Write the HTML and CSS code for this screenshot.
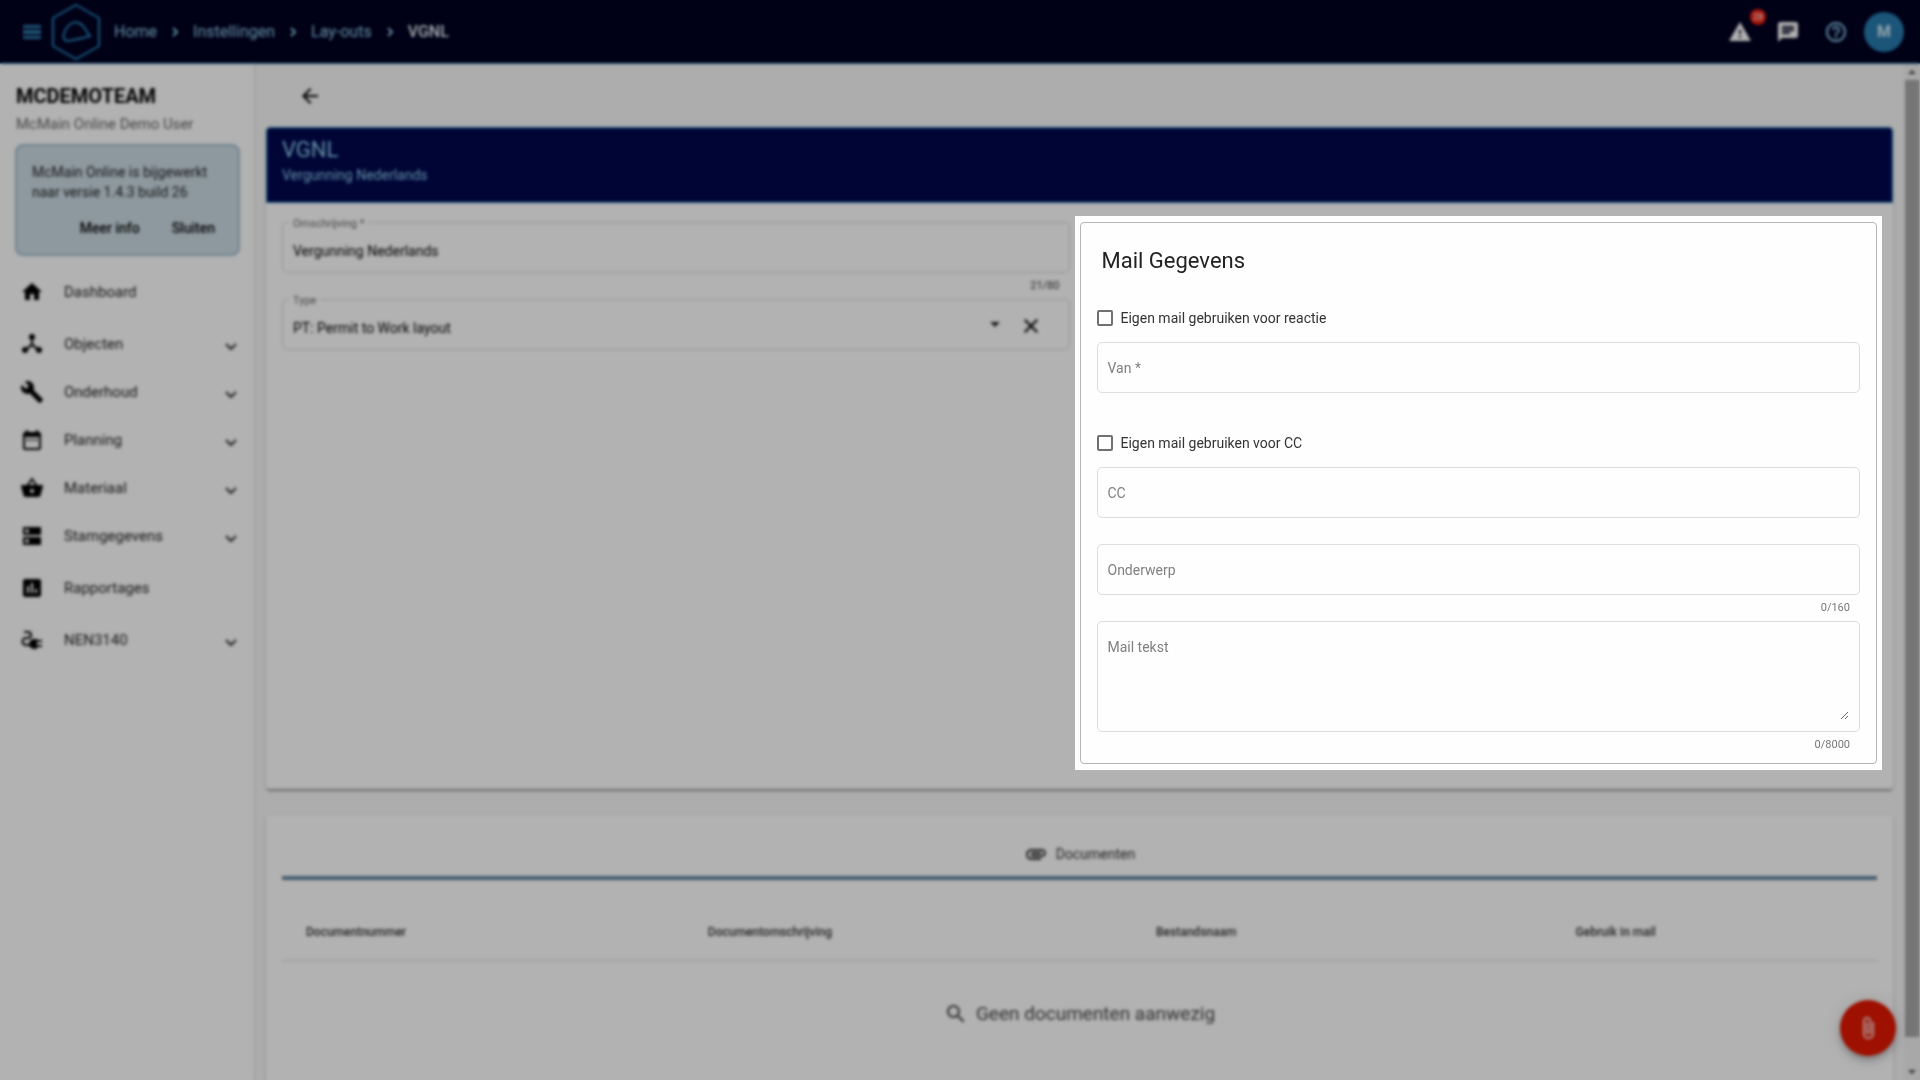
FILE: index.html
```html
<!DOCTYPE html>
<html lang="nl">
<head>
  <meta charset="UTF-8">
  <title>McMain Online - VGNL</title>
  <link rel="stylesheet" href="styles.css">
</head>
<body>
  <header class="topbar">
    <button class="icon-btn menu-btn" aria-label="Menu">
      <svg class="icon" viewBox="0 0 24 24"><path d="M3 19h18v-3H3v3zm0-5h18v-4H3v4zm0-9v3h18V5H3z"/></svg>
    </button>
    <svg class="logo" viewBox="0 0 50 58">
      <path d="M25 2 48 15v28L25 56 2 43V15z"/>
      <path d="M16 38c-5-2-4-7-1-12 3-5 8-8 13-6 5 2 7 8 11 13-7 2-15 4-23 5z"/>
    </svg>
    <nav class="breadcrumb">
      <a href="#">Home</a>
      <svg viewBox="0 0 8 10"><path d="M2 1l4 4-4 4"/></svg>
      <a href="#">Instellingen</a>
      <svg viewBox="0 0 8 10"><path d="M2 1l4 4-4 4"/></svg>
      <a href="#">Lay-outs</a>
      <svg viewBox="0 0 8 10"><path d="M2 1l4 4-4 4"/></svg>
      <a href="#" class="current">VGNL</a>
    </nav>
    <div class="actions">
      <button class="icon-btn" aria-label="Meldingen">
        <svg class="icon" viewBox="0 0 24 24"><path d="M1 21h22L12 2 1 21zm12-3h-2v-2h2v2zm0-4h-2v-4h2v4z"/></svg>
        <span class="badge">28</span>
      </button>
      <button class="icon-btn" aria-label="Berichten">
        <svg class="icon" viewBox="0 0 24 24"><path d="M20 2H4c-1.1 0-1.99.9-1.99 2L2 22l4-4h14c1.1 0 2-.9 2-2V4c0-1.1-.9-2-2-2zM6 9h12v2H6V9zm8 5H6v-2h8v2zm4-6H6V6h12v2z"/></svg>
      </button>
      <button class="icon-btn help" aria-label="Help">
        <svg class="icon" viewBox="0 0 24 24"><path d="M11 18h2v-2h-2v2zm1-16C6.48 2 2 6.48 2 12s4.48 10 10 10 10-4.48 10-10S17.52 2 12 2zm0 18c-4.41 0-8-3.59-8-8s3.59-8 8-8 8 3.59 8 8-3.59 8-8 8zm0-14c-2.21 0-4 1.79-4 4h2c0-1.1.9-2 2-2s2 .9 2 2c0 2-3 1.75-3 5h2c0-2.25 3-2.5 3-5 0-2.21-1.79-4-4-4z"/></svg>
      </button>
      <button class="avatar">M</button>
    </div>
  </header>

  <div class="layout">
    <aside class="sidebar">
      <h1>MCDEMOTEAM</h1>
      <p class="user">McMain Online Demo User</p>
      <div class="notice">
        <p>McMain Online is bijgewerkt naar versie 1.4.3 build 26</p>
        <div class="notice-actions">
          <button>Meer info</button>
          <button>Sluiten</button>
        </div>
      </div>
      <nav class="menu">
        <a href="#" class="single">
          <svg class="icon" viewBox="0 0 24 24"><path d="M10 20v-6h4v6h5v-8h3L12 3 2 12h3v8z"/></svg>
          <span>Dashboard</span>
        </a>
        <a href="#">
          <svg class="icon" viewBox="0 0 24 24"><circle cx="12" cy="5" r="3"/><circle cx="5" cy="18" r="3"/><circle cx="19" cy="18" r="3"/><path d="M11 6h2v6l6 5-1 2-6-5-6 5-1-2 6-5z"/></svg>
          <span>Objecten</span>
          <svg class="chevron" viewBox="0 0 12 8"><path d="M1 1l5 5 5-5"/></svg>
        </a>
        <a href="#">
          <svg class="icon" viewBox="0 0 24 24"><path d="M22.7 19l-9.1-9.1c.9-2.3.4-5-1.5-6.9-2-2-5-2.4-7.4-1.3L9 6 6 9 1.6 4.7C.4 7.1.9 10.1 2.9 12.1c1.9 1.9 4.6 2.4 6.9 1.5l9.1 9.1c.4.4 1 .4 1.4 0l2.3-2.3c.5-.4.5-1.1.1-1.4z"/></svg>
          <span>Onderhoud</span>
          <svg class="chevron" viewBox="0 0 12 8"><path d="M1 1l5 5 5-5"/></svg>
        </a>
        <a href="#">
          <svg class="icon" viewBox="0 0 24 24"><path d="M9 11H7v2h2v-2zm4 0h-2v2h2v-2zm4 0h-2v2h2v-2zm2-7h-1V2h-2v2H8V2H6v2H5c-1.11 0-1.99.9-1.99 2L3 20c0 1.1.89 2 2 2h14c1.1 0 2-.9 2-2V6c0-1.1-.9-2-2-2zm0 16H5V9h14v11z"/></svg>
          <span>Planning</span>
          <svg class="chevron" viewBox="0 0 12 8"><path d="M1 1l5 5 5-5"/></svg>
        </a>
        <a href="#">
          <svg class="icon" viewBox="0 0 24 24"><path d="M17.21 9l-4.38-6.56c-.19-.28-.51-.42-.83-.42-.32 0-.64.14-.83.43L6.79 9H2c-.55 0-1 .45-1 1 0 .09.01.18.04.27l2.54 9.27c.23.84 1 1.46 1.92 1.46h13c.92 0 1.69-.62 1.93-1.46l2.54-9.27L23 10c0-.55-.45-1-1-1h-4.79zM9 9l3-4.4L15 9H9zm3 8c-1.1 0-2-.9-2-2s.9-2 2-2 2 .9 2 2-.9 2-2 2z"/></svg>
          <span>Materiaal</span>
          <svg class="chevron" viewBox="0 0 12 8"><path d="M1 1l5 5 5-5"/></svg>
        </a>
        <a href="#">
          <svg class="icon" viewBox="0 0 24 24"><path d="M20 13H4c-.55 0-1 .45-1 1v6c0 .55.45 1 1 1h16c.55 0 1-.45 1-1v-6c0-.55-.45-1-1-1zM7 19c-1.1 0-2-.9-2-2s.9-2 2-2 2 .9 2 2-.9 2-2 2zM20 3H4c-.55 0-1 .45-1 1v6c0 .55.45 1 1 1h16c.55 0 1-.45 1-1V4c0-.55-.45-1-1-1zM7 9c-1.1 0-2-.9-2-2s.9-2 2-2 2 .9 2 2-.9 2-2 2z"/></svg>
          <span>Stamgegevens</span>
          <svg class="chevron" viewBox="0 0 12 8"><path d="M1 1l5 5 5-5"/></svg>
        </a>
        <a href="#" class="single">
          <svg class="icon" viewBox="0 0 24 24"><path d="M19 3H5c-1.1 0-2 .9-2 2v14c0 1.1.9 2 2 2h14c1.1 0 2-.9 2-2V5c0-1.1-.9-2-2-2zM9 17H7v-7h2v7zm4 0h-2V7h2v10zm4 0h-2v-4h2v4z"/></svg>
          <span>Rapportages</span>
        </a>
        <a href="#">
          <svg class="icon" viewBox="0 0 24 24"><path d="M4 4h4a3 3 0 010 6H6a3 3 0 000 7h5" fill="none" stroke="#000" stroke-width="2"/><path d="M17 11v10h-3a5 5 0 010-10zM17 12h5v2h-5zM17 17h5v2h-5z"/></svg>
          <span>NEN3140</span>
          <svg class="chevron" viewBox="0 0 12 8"><path d="M1 1l5 5 5-5"/></svg>
        </a>
      </nav>
    </aside>

    <main class="content">
      <div class="toolbar">
        <button class="icon-btn" aria-label="Terug">
          <svg class="icon" viewBox="0 0 24 24"><path d="M20 11H7.83l5.59-5.59L12 4l-8 8 8 8 1.41-1.41L7.83 13H20v-2z"/></svg>
        </button>
      </div>

      <section class="card">
        <div class="card-header">
          <h2>VGNL</h2>
          <p>Vergunning Nederlands</p>
        </div>
        <form class="card-body">
          <div class="column">
            <div class="field floating">
              <div class="box">
                <label for="omschrijving">Omschrijving *</label>
                <input id="omschrijving" type="text" value="Vergunning Nederlands">
              </div>
              <div class="counter">21/80</div>
            </div>
            <div class="field floating">
              <div class="box">
                <label for="type">Type</label>
                <select id="type">
                  <option>PT: Permit to Work layout</option>
                </select>
                <svg class="arrow" viewBox="0 0 24 24"><path d="M7 9l5 5 5-5z"/></svg>
                <button type="button" class="clear" aria-label="Wissen">
                  <svg class="icon" viewBox="0 0 24 24"><path d="M19 6.41L17.59 5 12 10.59 6.41 5 5 6.41 10.59 12 5 17.59 6.41 19 12 13.41 17.59 19 19 17.59 13.41 12z"/></svg>
                </button>
              </div>
            </div>
          </div>

          <div class="spotlight">
            <div class="mail-panel">
              <h3>Mail Gegevens</h3>
              <label class="check"><input type="checkbox"> Eigen mail gebruiken voor reactie</label>
              <div class="field">
                <div class="box">
                  <label for="van">Van *</label>
                  <input id="van" type="text">
                </div>
              </div>
              <label class="check"><input type="checkbox"> Eigen mail gebruiken voor CC</label>
              <div class="field">
                <div class="box">
                  <label for="cc">CC</label>
                  <input id="cc" type="text">
                </div>
              </div>
              <div class="field">
                <div class="box">
                  <label for="onderwerp">Onderwerp</label>
                  <input id="onderwerp" type="text">
                </div>
                <div class="counter">0/160</div>
              </div>
              <div class="field">
                <div class="box">
                  <label for="tekst">Mail tekst</label>
                  <textarea id="tekst"></textarea>
                </div>
                <div class="counter">0/8000</div>
              </div>
            </div>
          </div>
        </form>
      </section>

      <section class="card documents">
        <button class="tab">
          <svg class="icon" viewBox="0 0 24 24"><path d="M2 12.5C2 9.46 4.46 7 7.5 7H18c2.21 0 4 1.79 4 4s-1.79 4-4 4H9.5C8.12 15 7 13.88 7 12.5S8.12 10 9.5 10H17v2H9.41c-.55 0-.55 1 0 1H18c1.1 0 2-.9 2-2s-.9-2-2-2H7.5C5.57 9 4 10.57 4 12.5S5.57 16 7.5 16H17v2H7.5C4.46 18 2 15.54 2 12.5z"/></svg>
          Documenten
        </button>
        <table>
          <thead>
            <tr>
              <th class="col-number">Documentnummer</th>
              <th class="col-desc">Documentomschrijving</th>
              <th class="col-file">Bestandsnaam</th>
              <th>Gebruik in mail</th>
            </tr>
          </thead>
        </table>
        <div class="empty">
          <svg class="icon" viewBox="0 0 24 24"><path d="M15.5 14h-.79l-.28-.27C15.41 12.59 16 11.11 16 9.5 16 5.91 13.09 3 9.5 3S3 5.91 3 9.5 5.91 16 9.5 16c1.61 0 3.09-.59 4.23-1.57l.27.28v.79l5 4.99L20.49 19l-4.99-5zm-6 0C7.01 14 5 11.99 5 9.5S7.01 5 9.5 5 14 7.01 14 9.5 11.99 14 9.5 14z"/></svg>
          <span>Geen documenten aanwezig</span>
        </div>
      </section>
    </main>

    <div class="scrollbar">
      <svg viewBox="0 0 16 16"><path d="M4 10l4-4 4 4z"/></svg>
      <div class="thumb"></div>
      <svg viewBox="0 0 16 16"><path d="M4 6l4 4 4-4z"/></svg>
    </div>
  </div>

  <button class="fab" aria-label="Document toevoegen">
    <svg class="icon" viewBox="0 0 24 24"><path d="M16.5 6v11.5c0 2.21-1.79 4-4 4s-4-1.79-4-4V5c0-1.38 1.12-2.5 2.5-2.5s2.5 1.12 2.5 2.5v10.5c0 .55-.45 1-1 1s-1-.45-1-1V6H10v9.5c0 1.38 1.12 2.5 2.5 2.5s2.5-1.12 2.5-2.5V5c0-2.21-1.79-4-4-4S7 2.79 7 5v12.5c0 3.04 2.46 5.5 5.5 5.5s5.5-2.46 5.5-5.5V6h-1.5z"/></svg>
  </button>

  <div class="overlay"></div>
</body>
</html>
```

FILE: styles.css
```css
* { box-sizing: border-box; }
body {
  margin: 0;
  height: 100vh;
  display: flex;
  flex-direction: column;
  overflow: hidden;
  background: #f8f8f8;
  color: #222;
  font-family: Roboto, "Liberation Sans", sans-serif;
  font-size: 14px;
}
h1, h2, h3, p { margin: 0; font-weight: 400; }
a { color: inherit; text-decoration: none; }
button, input, select, textarea { font: inherit; color: inherit; }
button { border: 0; padding: 0; background: none; cursor: pointer; }
.icon { width: 24px; height: 24px; fill: currentColor; flex: none; }
.icon-btn {
  position: relative;
  width: 48px;
  height: 48px;
  display: flex;
  align-items: center;
  justify-content: center;
}

/* top bar */
.topbar {
  flex: none;
  height: 64px;
  display: flex;
  align-items: center;
  padding: 0 12px 0 8px;
  background: #000020;
  border-bottom: 1px solid #3a9ad4;
  color: #90cfee;
}
.menu-btn { color: #2f7eae; }
.logo { width: 50px; height: 58px; margin-left: -5px; fill: none; stroke: #2a84b8; stroke-width: 2; }
.breadcrumb { display: flex; align-items: center; gap: 14px; margin-left: 13px; font-size: 16px; }
.breadcrumb svg { width: 8px; height: 10px; fill: none; stroke: #90cfee; stroke-width: 2; }
.breadcrumb .current { color: #f0faff; font-weight: 500; }
.actions { display: flex; align-items: center; margin-left: auto; color: #fff; }
.help { color: #90cfee; }
.badge {
  position: absolute;
  top: 1px;
  right: -2px;
  width: 16px;
  height: 16px;
  border-radius: 50%;
  background: #f02010;
  color: #fff;
  font-size: 9px;
  line-height: 16px;
}
.avatar {
  width: 40px;
  height: 40px;
  margin: 0 4px;
  border-radius: 50%;
  background: #277bad;
  color: #d4ebf8;
  font-size: 16px;
  font-weight: 700;
}

.layout { flex: 1; display: flex; min-height: 0; }

/* sidebar */
.sidebar {
  flex: none;
  width: 256px;
  padding: 20px 14px 0 15px;
  background: #fff;
  border-right: 2px solid #eaeaea;
}
.sidebar h1 { padding-left: 1px; font-size: 20px; line-height: 24px; font-weight: 700; color: #000; }
.user { margin-top: 4px; padding-left: 1px; font-size: 15px; line-height: 24px; color: #666; }
.notice {
  margin-top: 8px;
  padding: 16px 7px 8px 15px;
  border: 2px solid #a5bccb;
  border-radius: 8px;
  background: #cbdbe4;
  line-height: 20px;
}
.notice-actions { display: flex; justify-content: flex-end; margin-top: 8px; }
.notice-actions button { height: 36px; padding: 0 16px; font-weight: 500; color: #000; }
.menu { margin-top: 12px; }
.menu a { display: flex; align-items: center; height: 48px; padding: 0 3px 0 5px; font-size: 15px; }
.menu .single { margin: 4px 0; }
.menu .single:first-child { margin-top: 0; }
.menu .icon { fill: #000; margin-right: 20px; }
.chevron { width: 12px; height: 8px; margin: 6px 0 0 auto; fill: none; stroke: #333; stroke-width: 2; }

/* content */
.content { flex: 1; min-width: 0; padding: 0 11px 0 10px; overflow: hidden; }
.toolbar { height: 63px; display: flex; align-items: center; padding-left: 20px; color: #000; }
.card {
  background: #fff;
  border-radius: 4px;
  box-shadow: 0 3px 1px -1px rgba(0,0,0,.2), 0 2px 2px rgba(0,0,0,.14), 0 1px 5px rgba(0,0,0,.12);
}
.card-header {
  height: 76px;
  padding: 8px 15px;
  border: 1px solid #3a9ad4;
  border-radius: 4px 4px 0 0;
  background: #00084e;
  color: #90cfee;
}
.card-header h2 { font-size: 22px; line-height: 28px; }
.card-header p { margin-top: 1px; line-height: 20px; }
.card-body { display: grid; grid-template-columns: 1fr 1fr; padding: 19px 16px 25px; }
.column { padding-right: 10px; }

.field { padding-bottom: 26px; position: relative; }
.box {
  position: relative;
  display: flex;
  align-items: center;
  min-height: 51px;
  padding: 0 10px;
  border: 1px solid #ddd;
  border-radius: 5px;
}
.box label { position: absolute; left: 10px; top: 15px; line-height: 20px; color: #808080; pointer-events: none; }
.box input, .box select {
  flex: 1;
  min-width: 0;
  height: 49px;
  padding: 0;
  border: 0;
  outline: 0;
  background: none;
  appearance: none;
}
.box textarea { flex: 1; height: 86px; margin: 12px 0 11px; padding: 0; border: 0; outline: 0; background: none; resize: vertical; }
.counter { position: absolute; right: 10px; bottom: 6px; font-size: 11px; line-height: 14px; color: #777; }
.floating .box { border-color: #d4d4d4; color: #000; }
.floating .box label { top: -7px; left: 6px; padding: 0 4px; background: #fff; font-size: 11px; line-height: 16px; color: #666; }
.floating .box input, .floating .box select { padding-top: 6px; }
.floating .counter { color: #333; }
.arrow { width: 24px; height: 24px; margin-right: 12px; fill: #222; }
.clear { display: flex; margin: 2px 16px 0 0; }

/* highlighted panel, stays above the overlay */
.spotlight {
  position: relative;
  z-index: 20;
  margin: -6px -5px;
  padding: 6px 5px;
  background: #fefefe;
}
.mail-panel { padding: 0 16px 5px; border: 1px solid #b5b5b5; border-radius: 4px; }
.mail-panel h3 { padding: 24px 5px 19px; font-size: 22px; line-height: 28px; }
.check { display: flex; align-items: center; gap: 8px; height: 48px; color: #333; }
.check input { appearance: none; width: 16px; height: 16px; margin: 0; border: 2px solid #707070; border-radius: 2px; }

/* documents */
.documents { margin-top: 26px; padding: 16px 16px 0; height: 400px; }
.tab {
  width: 100%;
  height: 49px;
  display: flex;
  align-items: center;
  justify-content: center;
  gap: 8px;
  border-bottom: 4px solid #6183a0;
  color: #333;
}
table { width: 100%; margin-top: 24px; border-collapse: collapse; table-layout: fixed; }
th { height: 56px; padding: 0; border-bottom: 1px solid #d4d4d4; text-align: left; font-size: 12px; font-weight: 500; color: #333; }
.col-number { width: 26.7%; padding-left: 24px; }
.col-desc { width: 28.1%; }
.col-file { width: 26.3%; }
.empty { height: 106px; display: flex; align-items: center; justify-content: center; gap: 8px; font-size: 19px; color: #444; }

.scrollbar { flex: none; width: 16px; display: flex; flex-direction: column; align-items: center; background: #f1f1f1; }
.scrollbar svg { width: 16px; height: 16px; flex: none; fill: #505050; }
.thumb { flex: 0 1 957px; width: 14px; margin-bottom: auto; background: #a8a8a8; }

.fab {
  position: fixed;
  right: 24px;
  bottom: 24px;
  width: 56px;
  height: 56px;
  display: flex;
  align-items: center;
  justify-content: center;
  border-radius: 50%;
  background: #e31700;
  color: #fff;
  box-shadow: 0 3px 5px -1px rgba(0,0,0,.2), 0 6px 10px rgba(0,0,0,.14), 0 1px 18px rgba(0,0,0,.12);
}
.overlay { position: fixed; inset: 0; z-index: 10; background: rgba(0,0,0,.3); backdrop-filter: blur(1px) blur(1px); }
```
